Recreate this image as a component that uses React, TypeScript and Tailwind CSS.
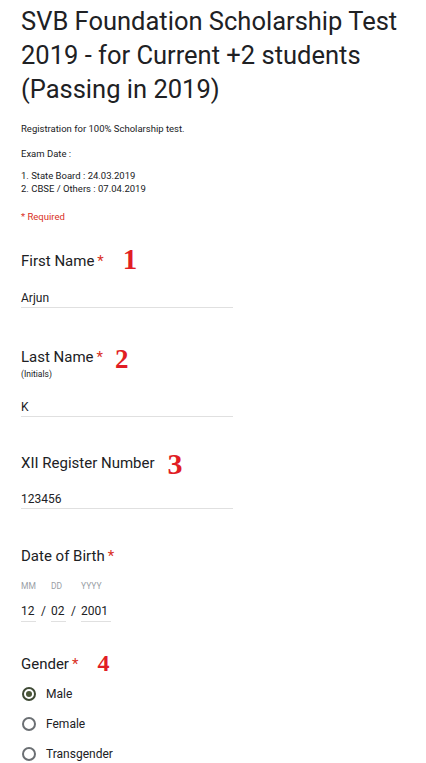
import React from 'react'

const font = { fontFamily: 'Roboto, "Noto Sans", Arial, sans-serif' }

function Mark({ n, className }: { n: string; className: string }) {
  return (
    <span
      className={`relative font-bold text-[#e11d24] leading-[0px] ${className}`}
      style={{ fontFamily: '"Liberation Serif", "Times New Roman", serif' }}
    >
      {n}
    </span>
  )
}

function Req() {
  return <span className="text-[#d93025] ml-[3px]">*</span>
}

function Question({ children }: { children: React.ReactNode }) {
  return (
    <div className="h-[20px] text-[15px] leading-[20px] text-[#202124] whitespace-nowrap">
      {children}
    </div>
  )
}

function Answer({ value }: { value: string }) {
  return (
    <div className="w-[212px] border-b border-[#e0e0e0] pb-[1px] text-[12px] leading-[16px] text-[#202124]">
      {value}
    </div>
  )
}

function Radio({ label, checked }: { label: string; checked?: boolean }) {
  return (
    <div className="flex items-center h-[30px]">
      <div
        className={`ml-[1px] w-[14px] h-[14px] rounded-full border-[2px] flex items-center justify-center ${
          checked ? 'border-[#3f4a35]' : 'border-[#6b6f73]'
        }`}
      >
        {checked && <div className="w-[6px] h-[6px] rounded-full bg-[#4a5638]" />}
      </div>
      <span className="ml-[10px] text-[12px] leading-[16px] text-[#202124]">{label}</span>
    </div>
  )
}

export default function App() {
  return (
    <div className="w-[426px] min-h-[763px] bg-white px-[21px] overflow-hidden" style={font}>
      {/* header */}
      <h1 className="pt-[4px] text-[25.5px] leading-[34px] font-normal text-[#202124]">
        SVB Foundation Scholarship Test 2019 - for Current +2 students (Passing in 2019)
      </h1>

      <div className="text-[9.5px] leading-[13px] text-[#202124]">
        <p className="mt-[16px]">Registration for 100% Scholarship test.</p>
        <p className="mt-[12px]">Exam Date :</p>
        <p className="mt-[9px]">1. State Board : 24.03.2019</p>
        <p>2. CBSE / Others : 07.04.2019</p>
        <p className="mt-[15px] text-[#d93025]">* Required</p>
      </div>

      {/* First name */}
      <div className="mt-[28px]">
        <Question>
          First Name<Req />
          <Mark n="1" className="text-[29px] ml-[19px] top-[3px]" />
        </Question>
      </div>
      <div className="mt-[19px]">
        <Answer value="Arjun" />
      </div>

      {/* Last name */}
      <div className="mt-[39px]">
        <Question>
          Last Name<Req />
          <Mark n="2" className="text-[27px] ml-[12px] top-[6px]" />
        </Question>
      </div>
      <div className="mt-[2px] text-[8.5px] leading-[10px] text-[#202124]">(Initials)</div>
      <div className="mt-[20px]">
        <Answer value="K" />
      </div>

      {/* Register number */}
      <div className="mt-[36px]">
        <Question>
          XII Register Number
          <Mark n="3" className="text-[30px] ml-[13px] top-[6px]" />
        </Question>
      </div>
      <div className="mt-[18px]">
        <Answer value="123456" />
      </div>

      {/* Date of birth */}
      <div className="mt-[37px]">
        <Question>
          Date of Birth<Req />
        </Question>
      </div>
      <div className="mt-[15px] flex items-end text-[#202124]">
        <div className="w-[15px]">
          <div className="text-[8.5px] leading-[10px] text-[#9aa0a6]">MM</div>
          <div className="mt-[12px] border-b border-[#e0e0e0] pb-[2px] text-[12px] leading-[16px]">12</div>
        </div>
        <div className="w-[15px] pb-[3px] text-center text-[12px] leading-[16px]">/</div>
        <div className="w-[15px]">
          <div className="text-[8.5px] leading-[10px] text-[#9aa0a6]">DD</div>
          <div className="mt-[12px] border-b border-[#e0e0e0] pb-[2px] text-[12px] leading-[16px]">02</div>
        </div>
        <div className="w-[15px] pb-[3px] text-center text-[12px] leading-[16px]">/</div>
        <div className="w-[30px]">
          <div className="text-[8.5px] leading-[10px] text-[#9aa0a6]">YYYY</div>
          <div className="mt-[12px] border-b border-[#e0e0e0] pb-[2px] text-[12px] leading-[16px]">2001</div>
        </div>
      </div>

      {/* Gender */}
      <div className="mt-[32px]">
        <Question>
          Gender<Req />
          <Mark n="4" className="text-[24px] ml-[19px] top-[2px]" />
        </Question>
      </div>
      <div className="mt-[5px]">
        <Radio label="Male" checked />
        <Radio label="Female" />
        <Radio label="Transgender" />
      </div>
    </div>
  )
}
